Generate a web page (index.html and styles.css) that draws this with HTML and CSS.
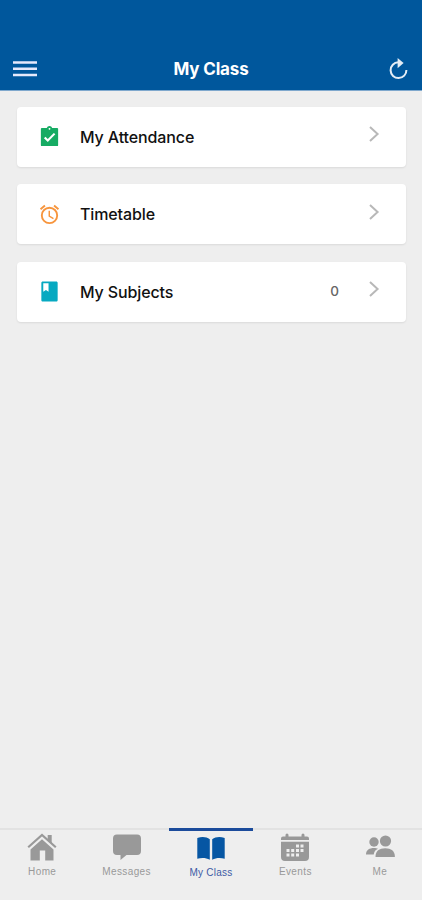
FILE: index.html
```html
<!DOCTYPE html>
<html lang="en">
<head>
<meta charset="utf-8">
<meta name="viewport" content="width=device-width, initial-scale=1">
<title>My Class</title>
<link rel="stylesheet" href="styles.css">
</head>
<body>
<div class="app">
  <header class="header">
    <svg class="menu" viewBox="0 0 26 18"><path d="M1 2.500h24M1 8.800h24M1 15h24"/></svg>
    <h1 class="title">My Class</h1>
    <svg class="refresh" viewBox="0 0 22 24"><path class="arc" d="M10.300 5.300A7.900 7.900 0 1 0 18.400 13"/><path class="tip" d="M9.600 1l6 5.100-6 5.100z"/></svg>
  </header>
  <main class="list">
    <a class="card">
      <svg class="icon green" viewBox="0 0 24 24"><path d="M20 3h-5.180C14.400 1.840 13.300 1 12 1s-2.400.84-2.820 2H4c-.6 0-1 .4-1 1v17c0 .6.4 1 1 1h16c.6 0 1-.4 1-1V4c0-.6-.4-1-1-1zm-8 0c.55 0 1 .45 1 1s-.45 1-1 1-1-.45-1-1 .45-1 1-1z"/><path class="check" d="M7 13l3.200 3.200L17.300 9"/></svg>
      <span class="label">My Attendance</span>
      <svg class="chevron" viewBox="0 0 12 18"><path d="M2 2l7.600 7L2 16"/></svg>
    </a>
    <a class="card">
      <svg class="icon orange" viewBox="0 0 24 24"><path d="M22 5.720l-4.600-3.860-1.290 1.530 4.600 3.860L22 5.720zM7.880 3.390L6.600 1.860 2 5.710l1.290 1.530 4.590-3.850zM12.500 8H11v6l4.750 2.850.75-1.230-4-2.370V8zM12 4a9 9 0 1 0 0 18a9 9 0 0 0 0-18zm0 16c-3.870 0-7-3.130-7-7s3.130-7 7-7 7 3.130 7 7-3.130 7-7 7z"/></svg>
      <span class="label">Timetable</span>
      <svg class="chevron" viewBox="0 0 12 18"><path d="M2 2l7.600 7L2 16"/></svg>
    </a>
    <a class="card">
      <svg class="icon teal" viewBox="0 0 24 24"><path d="M19 1.500H5c-.9 0-1.500.6-1.500 1.500v18c0 .9.6 1.500 1.500 1.500h14c.9 0 1.500-.6 1.500-1.500V3c0-.9-.6-1.500-1.500-1.500zM5.500 3.500H11v8.700l-2.700-1.700-2.800 1.700z"/></svg>
      <span class="label">My Subjects</span>
      <span class="count">0</span>
      <svg class="chevron" viewBox="0 0 12 18"><path d="M2 2l7.600 7L2 16"/></svg>
    </a>
  </main>
  <nav class="tabs">
    <a class="tab">
      <svg class="tab-icon" viewBox="0 0 30 28"><path d="M3.500 16.500L15 6.300l11.500 10.200V27.500h-8.300v-10h-5.400v10H3.500z"/><path d="M20.700 2h4v8.500l-4-3.500z"/><path class="roof" d="M1.200 14.300L15 2l13.800 12.300"/></svg>
      <span>Home</span>
    </a>
    <a class="tab">
      <svg class="tab-icon" viewBox="0 0 30 28"><path d="M5 1.500h20a4 4 0 0 1 4 4V18a4 4 0 0 1-4 4H14.500L8.500 27v-5H5a4 4 0 0 1-4-4V5.500a4 4 0 0 1 4-4z"/></svg>
      <span>Messages</span>
    </a>
    <a class="tab active">
      <svg class="tab-icon" viewBox="0 0 30 28"><path d="M1.300 4C6 2.500 10.500 2.800 13.800 5.300v20.500C10 23.600 5.500 23.500 1.300 24.800zM28.700 4C24 2.500 19.500 2.800 16.200 5.300v20.500c3.800-2.200 8.300-2.300 12.500-1z"/></svg>
      <span>My Class</span>
    </a>
    <a class="tab">
      <svg class="tab-icon" viewBox="0 0 30 28"><path d="M1 7V5.500a2 2 0 0 1 2-2h2.500V2a1.500 1.500 0 0 1 3 0v1.500h13V2a1.500 1.500 0 0 1 3 0v1.500H27a2 2 0 0 1 2 2V7zM1 8.800h28V24a4 4 0 0 1-4 4H5a4 4 0 0 1-4-4z"/><path class="days" d="M16 11.500h3v3h-3zM20.500 11.500h3v3h-3zM6.500 16h3v3h-3zM11.200 16h3v3h-3zM16 16h3v3h-3zM20.500 16h3v3h-3zM6.500 20.500h3v3h-3zM11.200 20.500h3v3h-3zM16 20.500h3v3h-3z"/></svg>
      <span>Events</span>
    </a>
    <a class="tab">
      <svg class="tab-icon" viewBox="0 0 30 28"><circle cx="9" cy="9" r="4.700"/><path d="M1 21.500c0-4.500 3.500-6.500 8-6.500 1.500 0 3 .2 4 .8-2.500 1-3.800 2.700-4.300 5.700z"/><circle cx="20.500" cy="8" r="5.600"/><path d="M10.500 24c0-6 3.800-8.700 9.700-8.700s9.700 2.700 9.700 8.700z"/></svg>
      <span>Me</span>
    </a>
  </nav>
</div>
</body>
</html>
```
FILE: styles.css
```css
* { box-sizing: border-box; }
body { margin: 0; background: #eee; font-family: "Liberation Sans", Arial, sans-serif; }
.app { height: 900px; display: flex; flex-direction: column; }
.header {
  height: 91px;
  padding: 47px 12px 0;
  display: grid;
  grid-template-columns: 26px 1fr 26px;
  align-items: center;
  background: #00579c;
  border-bottom: 1px solid #7fa8cd;
}
.menu { width: 26px; height: 18px; fill: none; stroke: #e6e9fb; stroke-width: 2.4; }
.title {
  margin: 0;
  text-align: center;
  color: #fff;
  font: 700 17px/22px Inter, sans-serif;
  letter-spacing: -.15px;
}
.refresh { width: 22px; height: 24px; justify-self: end; }
.arc { fill: none; stroke: #e4edf5; stroke-width: 2; }
.tip { fill: #e4edf5; }
.list {
  flex: 1;
  padding: 15.500px 16px 0 17px;
  display: flex;
  flex-direction: column;
  gap: 17.500px;
}
.card {
  height: 60px;
  padding: 0 26px 0 21px;
  display: flex;
  align-items: center;
  background: #fff;
  border-radius: 4px;
  box-shadow: 0 1px 2px rgba(0, 0, 0, .09);
}
.icon { width: 23px; height: 23px; margin-right: 19px; }
.green { fill: #16ab63; }
.check { fill: none; stroke: #fff; stroke-width: 2.2; }
.orange { fill: #f7953d; }
.teal { fill: #06a9c1; }
.label { flex: 1; color: #111; font: 500 16px/22px Inter, sans-serif; letter-spacing: -.12px; }
.count { margin: 0 29px 2px 0; color: #666; font: 500 13.5px/18px Inter, sans-serif; }
.chevron { width: 12px; height: 18px; margin-bottom: 5px; fill: none; stroke: #b8b8b8; stroke-width: 2; }
.tabs {
  height: 72px;
  display: grid;
  grid-template-columns: repeat(5, 1fr);
  border-top: 2px solid #e2e2e2;
}
.tab {
  display: flex;
  flex-direction: column;
  align-items: center;
  padding-top: 3px;
  color: #999;
  font-size: 10px;
  line-height: 12px;
  letter-spacing: .4px;
}
.tab-icon { width: 30px; height: 28px; margin-bottom: 5px; fill: #999; }
.roof { fill: none; stroke: #999; stroke-width: 2.2; paint-order: stroke; }
.days { fill: #eee; }
.active { margin-top: -2px; padding-top: 3px; border-top: 3px solid #1b4b9b; color: #3d5ba5; letter-spacing: .25px; }
.active .tab-icon { fill: #0656a3; }
```
